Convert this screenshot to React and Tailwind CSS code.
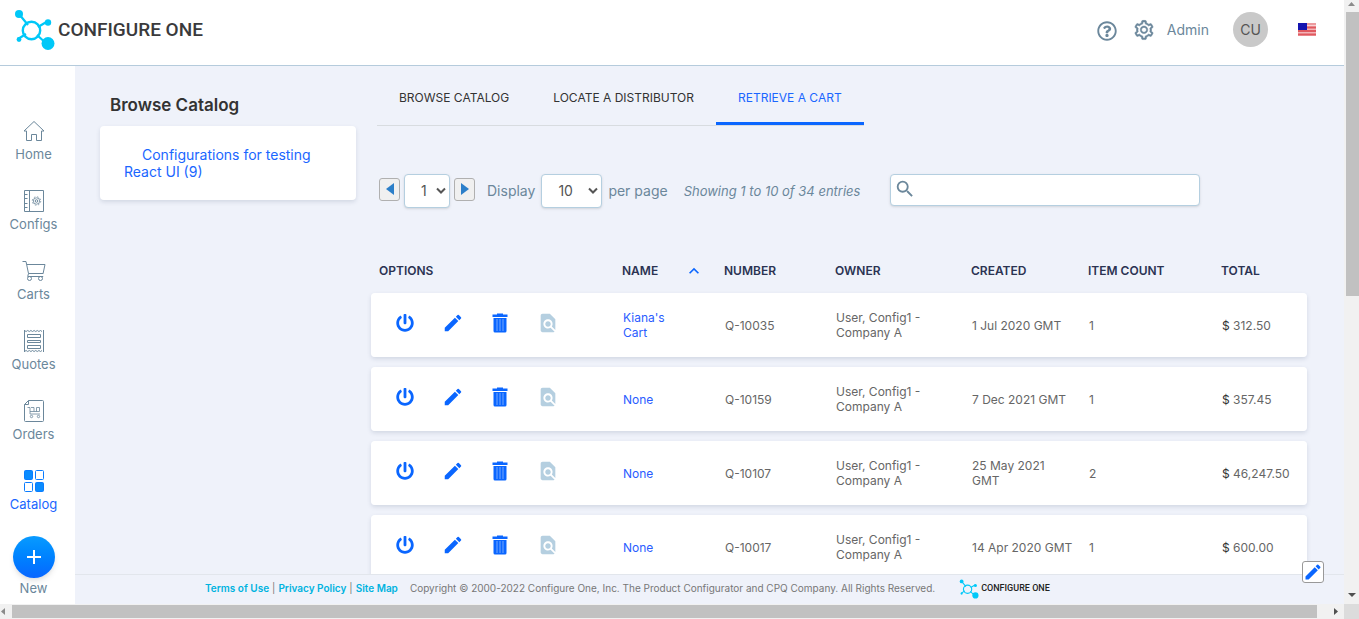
import { AiOutlineSetting } from 'react-icons/ai'
import { FaPowerOff, FaRegQuestionCircle } from 'react-icons/fa'
import { MdEdit, MdFindInPage, MdKeyboardArrowUp, MdSearch } from 'react-icons/md'

const navItems = [
  { label: 'Home', Icon: HomeIcon },
  { label: 'Configs', Icon: ConfigsIcon },
  { label: 'Carts', Icon: CartsIcon },
  { label: 'Quotes', Icon: QuotesIcon },
  { label: 'Orders', Icon: OrdersIcon },
  { label: 'Catalog', Icon: CatalogIcon, active: true },
]

const tabs = [
  { label: 'BROWSE CATALOG' },
  { label: 'LOCATE A DISTRIBUTOR' },
  { label: 'RETRIEVE A CART', active: true },
]

const carts = [
  { name: "Kiana's Cart", number: 'Q-10035', created: '1 Jul 2020 GMT', count: 1, total: '312.50' },
  { name: 'None', number: 'Q-10159', created: '7 Dec 2021 GMT', count: 1, total: '357.45' },
  { name: 'None', number: 'Q-10107', created: '25 May 2021 GMT', count: 2, total: '46,247.50' },
  { name: 'None', number: 'Q-10017', created: '14 Apr 2020 GMT', count: 1, total: '600.00' },
]

function HomeIcon() {
  return (
    <svg width="22" height="24" viewBox="0 0 22 24" fill="none" stroke="currentColor">
      <path d="M1 12 11 2.500 21 12H18.500v9.500h-5v-6h-5v6h-5V12z" />
    </svg>
  )
}

function ConfigsIcon() {
  return (
    <svg width="22" height="24" viewBox="0 0 22 24" fill="none" stroke="currentColor">
      <path d="M1.500 1.500h19v21h-19zM6.500 1.500v21M1.500 5.500h3M1.500 9.500h3M1.500 14.500h3M1.500 18.500h3" />
      <circle cx="13.500" cy="12" r="1.300" />
      <circle cx="13.500" cy="12" r="3.200" strokeWidth=".8" />
      <circle cx="13.500" cy="12" r="4.200" strokeWidth=".8" strokeDasharray="1.600 1.700" />
    </svg>
  )
}

function CartsIcon() {
  return (
    <svg width="24" height="24" viewBox="0 0 24 24" fill="none" stroke="currentColor">
      <path d="M.5 2.500h3.500l2.500 12h15M5 5.500h18l-1.800 8.500M6.500 14.500l-.8 3h15.500" />
      <circle cx="7.500" cy="19.500" r="2" />
      <circle cx="18.500" cy="19.500" r="2" />
    </svg>
  )
}

function QuotesIcon() {
  return (
    <svg width="22" height="24" viewBox="0 0 22 24" fill="none" stroke="currentColor">
      <path d="M1.500 1v22M20.500 1v22" />
      <path d="m1.500 1.500 1.600 1 1.600-1 1.600 1 1.600-1 1.600 1 1.600-1 1.600 1 1.600-1 1.600 1 1.600-1 1.500 1M1.500 22.500l1.600-1 1.600 1 1.600-1 1.600 1 1.600-1 1.600 1 1.600-1 1.600 1 1.600-1 1.600 1 1.500-1" />
      <path d="M4.500 5.500h13v3h-13zM4.500 11.500h13v2h-13zM4.500 16.500h13v3h-13z" />
    </svg>
  )
}

function OrdersIcon() {
  return (
    <svg width="22" height="24" viewBox="0 0 22 24" fill="none" stroke="currentColor">
      <path d="M5.500 1.500h14q1 0 1 1v19q0 1-1 1h-17q-1 0-1-1v-16zM1.500 5.500h4v-4" />
      <path d="M4.500 8.500h2.500v6.500h10M7 12.500h9.500v-4h-3v4M8 8.500h3v4" strokeWidth=".8" />
      <circle cx="8.500" cy="17.500" r="1.200" strokeWidth=".8" />
      <circle cx="15.500" cy="17.500" r="1.200" strokeWidth=".8" />
    </svg>
  )
}

function CatalogIcon() {
  return (
    <svg width="22" height="24" viewBox="0 0 22 24" fill="none" stroke="#0a7cff">
      <rect x="1.500" y="1.500" width="8" height="9" rx="1" fill="#0a8cff" />
      <rect x="12.500" y="1.500" width="8" height="9" rx="1" />
      <rect x="1.500" y="13.500" width="8" height="9" rx="1" />
      <rect x="12.500" y="13.500" width="8" height="9" rx="1" fill="#0a8cff" />
    </svg>
  )
}

function TrashIcon() {
  return (
    <svg width="16" height="20" viewBox="0 0 16 20" fill="currentColor">
      <path d="M5 .5h6v1h4.500v2.500H.5V1.500H5z" />
      <path d="M1.500 5h13v13q0 1.500-1.500 1.500H3q-1.500 0-1.500-1.500z" />
      <path d="M5 6v12M8 6v12M11 6v12" stroke="#8fbaff" strokeWidth=".8" />
    </svg>
  )
}

function LogoMark({ className }) {
  return (
    <svg className={className} viewBox="0 0 41 42" fill="#00c8f8" stroke="#00c8f8">
      <path d="m5 5 9 11M24 18l10-6M12 25l-8 5M23 26l11 10" strokeWidth="2.200" fill="none" />
      <circle cx="17.500" cy="21.500" r="8.700" fill="none" strokeWidth="2.400" />
      <circle cx="5" cy="5" r="4" stroke="none" />
      <circle cx="34" cy="13.500" r="3.200" stroke="none" />
      <circle cx="5" cy="30.500" r="2.400" stroke="none" />
      <circle cx="34" cy="34.500" r="6.500" stroke="none" />
    </svg>
  )
}

function Flag() {
  return (
    <svg width="18" height="13" viewBox="0 0 18 13" role="img" aria-label="United States">
      <rect width="18" height="13" fill="#f3b4b8" />
      <path d="M0 1h18M0 4.500h18M0 8h18M0 11.500h18" stroke="#e0595f" strokeWidth="1.800" />
      <rect width="18" height="3" fill="white" opacity=".4" />
      <rect width="9" height="7" fill="#1414b0" />
    </svg>
  )
}

function Chevron() {
  return (
    <svg
      className="pointer-events-none absolute right-1 top-1/2 -mt-1"
      width="10"
      height="8"
      viewBox="0 0 10 8"
      fill="none"
      stroke="#555"
      strokeWidth="2"
    >
      <path d="m1 1.500 4 4 4-4" />
    </svg>
  )
}

function Header() {
  return (
    <header className="flex h-[66px] shrink-0 items-center justify-between border-b border-[#b5cbdc] bg-white pl-3.5 pr-7">
      <a href="#" className="flex items-center gap-[3px] pb-1.5">
        <LogoMark className="h-[42px] w-[41px]" />
        <span className="pt-0.5 font-['Roboto',sans-serif] text-[19px] font-medium text-[#3a3a3c]">CONFIGURE ONE</span>
      </a>
      <div className="flex items-center pb-1.5 text-[#6b879b]">
        <button aria-label="Help" className="mr-4 pt-0.5">
          <FaRegQuestionCircle className="size-5" />
        </button>
        <button aria-label="Settings" className="mr-3">
          <AiOutlineSetting className="size-[22px]" stroke="currentColor" strokeWidth="24" />
        </button>
        <a href="#" className="mr-6 text-sm">Admin</a>
        <button className="mr-[30px] size-[35px] rounded-full bg-[#c9c9c9] text-sm text-[#555]">CU</button>
        <Flag />
      </div>
    </header>
  )
}

function Sidebar() {
  return (
    <nav className="flex w-[75px] shrink-0 flex-col bg-white pr-1.5 pt-[53px] text-[13px] text-[#6b879b]">
      {navItems.map(({ label, Icon, active }) => (
        <a
          key={label}
          href="#"
          className={`flex h-[70px] shrink-0 flex-col items-center gap-[3px] pr-0.5 ${active ? 'text-[#1a66ff]' : ''}`}
        >
          <Icon />
          <span className="leading-4">{label}</span>
        </a>
      ))}
      <button className="-mt-[3px] flex flex-col items-center gap-0.5 pr-0.5">
        <span className="flex size-[42px] items-center justify-center rounded-full bg-linear-to-b from-[#0a9bff] to-[#0a66ff] shadow-md">
          <svg width="16" height="16" viewBox="0 0 16 16" stroke="white" strokeWidth="2">
            <path d="M8 1v14M1 8h14" />
          </svg>
        </span>
        <span className="leading-4">New</span>
      </button>
    </nav>
  )
}

function Tabs() {
  return (
    <div className="flex">
      <div role="tablist" className="ml-1.5 flex h-[60px] border-b border-[#d8dce0] text-xs">
        {tabs.map((tab) => (
          <button
            key={tab.label}
            role="tab"
            aria-selected={!!tab.active}
            className={`border-b-3 px-[22px] pt-2 ${tab.active ? 'border-[#0a66ff] text-[#1a66ff]' : 'border-transparent text-[#333]'}`}
          >
            {tab.label}
          </button>
        ))}
      </div>
    </div>
  )
}

function Pager() {
  return (
    <div className="mt-12 flex h-[34px] items-center pl-2 text-sm text-[#6b879b]">
      <button
        aria-label="Previous page"
        className="mb-1 mr-1 flex h-[23px] w-[21px] items-center justify-center rounded-[3px] border border-[#b0b0b0] bg-[#f0f0f0]"
      >
        <svg width="8" height="12" viewBox="0 0 8 12" fill="#2c7fc9">
          <path d="M8 0v12L0 6z" />
        </svg>
      </button>
      <div className="relative">
        <select
          aria-label="Page"
          className="h-[34px] w-[46px] appearance-none rounded border border-[#b5cfe0] bg-white pl-4 text-[#555] shadow-sm"
        >
          <option>1</option>
        </select>
        <Chevron />
      </div>
      <button
        aria-label="Next page"
        className="mb-1 ml-1 mr-3 flex h-[23px] w-[21px] items-center justify-center rounded-[3px] border border-[#b0b0b0] bg-[#f0f0f0]"
      >
        <svg width="8" height="12" viewBox="0 0 8 12" fill="#2c7fc9">
          <path d="M0 0v12l8-6z" />
        </svg>
      </button>
      <label htmlFor="page-size" className="mr-1.5">Display</label>
      <div className="relative">
        <select
          id="page-size"
          className="h-[34px] w-[61px] appearance-none rounded border border-[#b5cfe0] bg-white pl-4 text-[#555] shadow-sm"
        >
          <option>10</option>
        </select>
        <Chevron />
      </div>
      <span className="ml-1.5 whitespace-nowrap">per page</span>
      <span className="ml-4 whitespace-nowrap text-[13px] italic">Showing 1 to 10 of 34 entries</span>
      <div className="relative ml-[30px] self-start">
        <MdSearch className="absolute left-1 top-1 size-[22px]" />
        <input
          type="search"
          aria-label="Search carts"
          className="block h-8 w-[310px] rounded border border-[#b5cfe0] bg-white pl-8 shadow-sm"
        />
      </div>
    </div>
  )
}

function CartTable() {
  return (
    <table className="mt-6 w-full table-fixed border-separate border-spacing-x-0 border-spacing-y-2.5 text-left">
      <thead className="text-xs text-[#2b3352]">
        <tr className="h-[41px] *:pl-2 *:pt-4 *:font-semibold">
          <th>OPTIONS</th>
          <th className="w-[102px]">
            <span className="flex items-center justify-between pr-3">
              NAME
              <MdKeyboardArrowUp className="size-5 text-[#0a66ff]" />
            </span>
          </th>
          <th className="w-[111px]">NUMBER</th>
          <th className="w-[136px]">OWNER</th>
          <th className="w-[117px]">CREATED</th>
          <th className="w-[133px]">ITEM COUNT</th>
          <th className="w-[94px]">TOTAL</th>
        </tr>
      </thead>
      <tbody className="text-xs leading-[15px] text-[#666]">
        {carts.map((cart) => (
          <tr key={cart.number} className="h-16 rounded shadow-[0_2px_4px_rgba(60,80,110,0.16)] *:bg-white *:pl-[9px]">
            <td className="rounded-l">
              <div className="flex items-center gap-[29px] pb-1 pl-4 text-[#0a66ff]">
                <button aria-label="Open cart"><FaPowerOff className="size-[18px]" /></button>
                <button aria-label="Edit cart" className="-mx-px"><MdEdit className="size-[22px]" /></button>
                <button aria-label="Delete cart"><TrashIcon /></button>
                <button aria-label="Preview cart" disabled className="text-[#b5cfe0]">
                  <MdFindInPage className="size-[22px]" />
                </button>
              </div>
            </td>
            <td className="pr-6">
              <a href="#" className="text-[#2a5cff]">{cart.name}</a>
            </td>
            <td>{cart.number}</td>
            <td className="pr-8">User, Config1 - Company A</td>
            <td className="pr-1.5">{cart.created}</td>
            <td>{cart.count}</td>
            <td className="whitespace-nowrap rounded-r">
              <span className="text-[#333]">$</span> {cart.total}
            </td>
          </tr>
        ))}
      </tbody>
    </table>
  )
}

function Footer() {
  return (
    <footer className="relative z-10 flex h-[30px] shrink-0 items-center border-t border-[#e2e6ec] bg-[#eff2fa] pb-0.5 pl-[130px] text-[10px] text-[#777]">
      <div className="flex gap-[3px] whitespace-nowrap font-semibold text-[#00b3e0]">
        <a href="#">Terms of Use</a>
        <span className="font-normal text-[#777]">|</span>
        <a href="#">Privacy Policy</a>
        <span className="font-normal text-[#777]">|</span>
        <a href="#">Site Map</a>
      </div>
      <p className="ml-3 whitespace-nowrap">
        Copyright © 2000-2022 Configure One, Inc. The Product Configurator and CPQ Company. All Rights Reserved.
      </p>
      <a href="#" className="ml-6 flex items-center gap-0.5 whitespace-nowrap">
        <LogoMark className="size-5" />
        <span className="font-['Roboto',sans-serif] text-[9px] font-medium text-[#222]">CONFIGURE ONE</span>
      </a>
      <button
        aria-label="Edit page"
        className="absolute -top-3.5 right-5 flex size-[22px] items-center justify-center rounded-[3px] border border-[#999] bg-white"
      >
        <MdEdit className="size-5 text-[#0a66ff]" />
      </button>
    </footer>
  )
}

function ScrollArrow({ d, fill = '#505050' }) {
  return (
    <svg className="shrink-0" width="15" height="15" viewBox="0 0 15 15" fill={fill}>
      <path d={d} />
    </svg>
  )
}

export default function App() {
  return (
    <div className="grid h-screen grid-cols-[minmax(0,1fr)_15px] grid-rows-[minmax(0,1fr)_15px] overflow-hidden bg-[#eff2fa] font-['Inter',sans-serif]">
      <div className="flex min-h-0 flex-col">
        <Header />
        <div className="flex min-h-0 flex-1">
          <Sidebar />
          <div className="flex min-w-0 flex-1 flex-col">
            <div className="flex min-h-0 flex-1 overflow-hidden pl-[25px] pr-[37px]">
              <aside className="mr-[15px] w-64 shrink-0 pt-[27px]">
                <h1 className="pl-2.5 text-[17px] font-semibold leading-6 text-[#333]">Browse Catalog</h1>
                <div className="mt-[9px] rounded bg-white px-6 py-5 text-sm leading-[17px] shadow-[0_2px_4px_rgba(60,80,110,0.16)]">
                  <a href="#" className="block indent-[18px] text-[#1a66ff]">Configurations for testing React UI (9)</a>
                </div>
              </aside>
              <main className="min-w-0 flex-1">
                <Tabs />
                <Pager />
                <CartTable />
              </main>
            </div>
            <Footer />
          </div>
        </div>
      </div>
      <div className="flex flex-col bg-[#f1f1f1]">
        <ScrollArrow d="M4 6h7L7.500 2z" fill="#8b8b8b" />
        <div className="-mt-[3px] h-[284px] w-[13px] self-end bg-[#c1c1c1]" />
        <div className="flex-1" />
        <ScrollArrow d="M4 4h8L8 8z" />
      </div>
      <div className="flex items-center bg-[#f1f1f1]">
        <ScrollArrow d="M5 4v7L1 7.500z" fill="#8b8b8b" />
        <div className="-ml-[3px] mr-3 h-[13px] flex-1 bg-[#c1c1c1]" />
        <ScrollArrow d="M5 4v7l4-3.500z" />
      </div>
      <div className="bg-[#dcdcdc]" />
    </div>
  )
}
